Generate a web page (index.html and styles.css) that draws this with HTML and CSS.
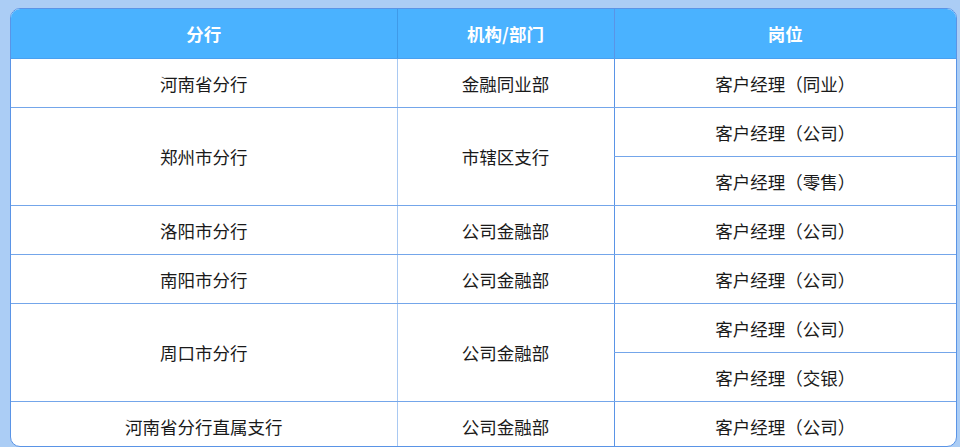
FILE: index.html
```html
<!DOCTYPE html>
<html lang="zh-CN">
<head>
<meta charset="utf-8">
<link rel="stylesheet" href="styles.css">
</head>
<body>
<div class="card">
  <table class="grid">
    <colgroup>
      <col class="c1"><col class="c2"><col class="c3">
    </colgroup>
    <thead>
      <tr><th>分行</th><th class="mid">机构/部门</th><th class="last">岗位</th></tr>
    </thead>
    <tbody>
      <tr><td>河南省分行</td><td class="mid">金融同业部</td><td class="last">客户经理（同业）</td></tr>
      <tr><td rowspan="2">郑州市分行</td><td class="mid" rowspan="2">市辖区支行</td><td class="last">客户经理（公司）</td></tr>
      <tr><td class="last">客户经理（零售）</td></tr>
      <tr><td>洛阳市分行</td><td class="mid">公司金融部</td><td class="last">客户经理（公司）</td></tr>
      <tr><td>南阳市分行</td><td class="mid">公司金融部</td><td class="last">客户经理（公司）</td></tr>
      <tr><td rowspan="2">周口市分行</td><td class="mid" rowspan="2">公司金融部</td><td class="last">客户经理（公司）</td></tr>
      <tr><td class="last">客户经理（交银）</td></tr>
      <tr><td>河南省分行直属支行</td><td class="mid">公司金融部</td><td class="last">客户经理（公司）</td></tr>
    </tbody>
  </table>
</div>
</body>
</html>
```
FILE: styles.css
```css
html, body {
  margin: 0;
  height: 100%;
  overflow: hidden;
}
body {
  background: #abcdf5;
  padding: 8px 3px 0 10px;
  font-family: "Noto Sans CJK SC", "Noto Sans", sans-serif;
}
.card {
  width: 945px;
  height: 437px;
  border: 1px solid #5a94e6;
  border-radius: 10px;
  overflow: hidden;
  background: #ffffff;
}
.grid {
  width: 100%;
  border-collapse: collapse;
  table-layout: fixed;
}
.c1 { width: 386px; }
.c2 { width: 217px; }
.c3 { width: auto; }
.grid th {
  height: 49px;
  padding: 0;
  background: #4ab2ff;
  color: #ffffff;
  font-size: 17.5px;
  font-weight: 700;
  text-align: center;
  border-bottom: 1px solid #4aa0f0;
}
.grid td {
  height: 48px;
  padding: 0;
  color: #1a1a1a;
  font-size: 17.5px;
  text-align: center;
  border-bottom: 1px solid #74a6ea;
}
.grid th.mid, .grid td.mid {
  border-left: 1px solid #a9c9f2;
}
.grid th.mid { border-left-color: #3f9ae8; }
.grid th.last, .grid td.last {
  border-left: 1px solid #5a94e6;
}
```
